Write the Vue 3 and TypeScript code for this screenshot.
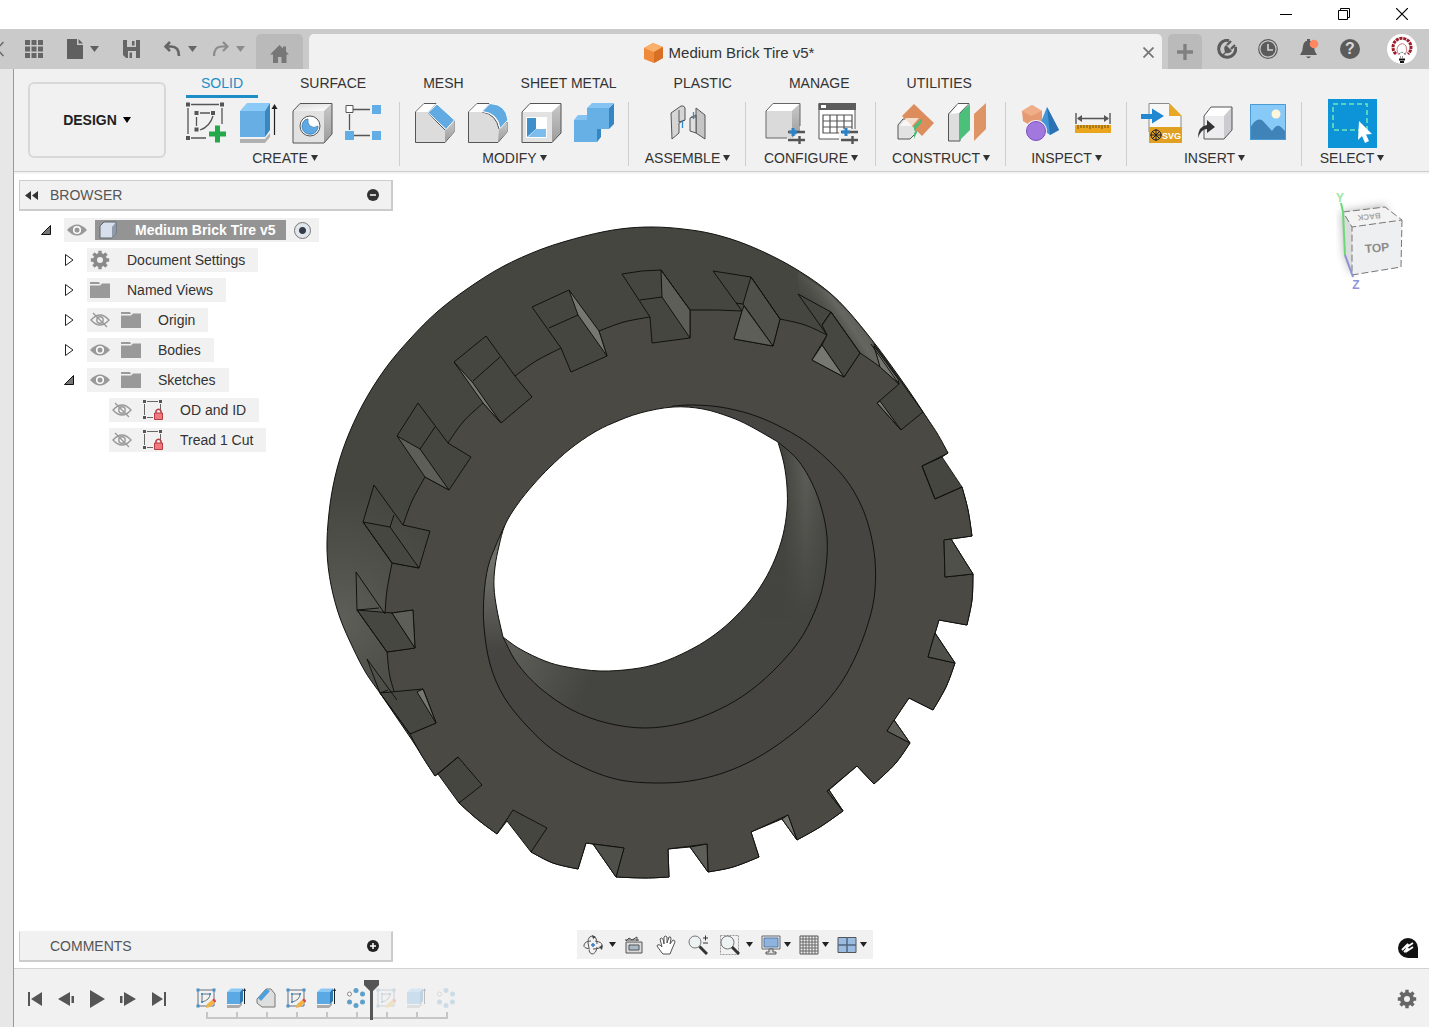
<script setup lang="ts">
import { ref } from 'vue'

type Point = [number, number]

interface RibbonGroup {
  label: string
  icons: string[]
  selected?: boolean
}

interface TreeRow {
  label: string
  level: number
  toggle: 'open' | 'closed' | 'none'
  eye: 'on' | 'off' | 'none'
  icon: string
}

const ribbonTabs = ['SOLID', 'SURFACE', 'MESH', 'SHEET METAL', 'PLASTIC', 'MANAGE', 'UTILITIES']
const activeTab = ref('SOLID')

const groups: RibbonGroup[] = [
  { label: 'CREATE', icons: ['sketch', 'extrude', 'hole', 'pattern'] },
  { label: 'MODIFY', icons: ['chamfer', 'fillet', 'shell', 'combine'] },
  { label: 'ASSEMBLE', icons: ['joint'] },
  { label: 'CONFIGURE', icons: ['configure', 'table'] },
  { label: 'CONSTRUCT', icons: ['plane', 'midplane'] },
  { label: 'INSPECT', icons: ['shapes', 'measure'] },
  { label: 'INSERT', icons: ['svgfile', 'derive', 'picture'] },
  { label: 'SELECT', icons: ['select'], selected: true },
]

const rows: TreeRow[] = [
  { label: 'Document Settings', level: 1, toggle: 'closed', eye: 'none', icon: 'gear' },
  { label: 'Named Views', level: 1, toggle: 'closed', eye: 'none', icon: 'folder' },
  { label: 'Origin', level: 1, toggle: 'closed', eye: 'off', icon: 'folder' },
  { label: 'Bodies', level: 1, toggle: 'closed', eye: 'on', icon: 'folder' },
  { label: 'Sketches', level: 1, toggle: 'open', eye: 'on', icon: 'folder' },
  { label: 'OD and ID', level: 2, toggle: 'none', eye: 'off', icon: 'locked' },
  { label: 'Tread 1 Cut', level: 2, toggle: 'none', eye: 'off', icon: 'locked' },
]

const navTools = [
  { icon: 'orbit', label: 'Orbit', menu: true, wide: true },
  { icon: 'lookat', label: 'Look At', menu: false, wide: false },
  { icon: 'hand', label: 'Pan', menu: false, wide: false },
  { icon: 'zoom', label: 'Zoom', menu: false, wide: false },
  { icon: 'zoomfit', label: 'Fit', menu: true, wide: true },
  { icon: 'monitor', label: 'Display Settings', menu: true, wide: false },
  { icon: 'gridlines', label: 'Grid and Snaps', menu: true, wide: false },
  { icon: 'viewports', label: 'Viewports', menu: true, wide: false },
]

const players = ['first', 'previous', 'play', 'next', 'last']

const features = [
  { icon: 't-sketch', dim: false },
  { icon: 't-extrude', dim: false },
  { icon: 't-chamfer', dim: false },
  { icon: 't-sketch', dim: false },
  { icon: 't-extrude', dim: false },
  { icon: 't-pattern', dim: false },
  { icon: 't-sketch', dim: true },
  { icon: 't-extrude', dim: true },
  { icon: 't-pattern', dim: true },
]

// Smooth curve through the points of one run, as cubic segments.
function curve(run: Point[]): string {
  let d = ''
  for (let i = 0; i < run.length - 1; i++) {
    const p0 = run[Math.max(i - 1, 0)]
    const p1 = run[i]
    const p2 = run[i + 1]
    const p3 = run[Math.min(i + 2, run.length - 1)]
    const c1 = [p1[0] + (p2[0] - p0[0]) / 6, p1[1] + (p2[1] - p0[1]) / 6]
    const c2 = [p2[0] - (p3[0] - p1[0]) / 6, p2[1] - (p3[1] - p1[1]) / 6]
    d += `C${c1[0].toFixed(1)},${c1[1].toFixed(1)} ${c2[0].toFixed(1)},${c2[1].toFixed(1)} ${p2[0]},${p2[1]}`
  }
  return d
}

// Runs are smooth inside and joined to each other by straight edges.
function outline(runs: Point[][]): string {
  return runs.map((run, i) => `${i === 0 ? 'M' : 'L'}${run[0][0]},${run[0][1]}${curve(run)}`).join('') + 'Z'
}

const body = outline([
  [[435, 776], [412, 740]],
  [[380, 693], [366, 673], [353, 648], [340, 618], [331, 585], [327, 550], [329, 513], [335, 477], [346, 441], [363, 404], [385, 369], [410, 339], [437, 312], [467, 289], [502, 267], [542, 249], [585, 236], [620, 229], [652, 227], [683, 229], [713, 234], [745, 244], [778, 259], [807, 276], [830, 293], [849, 312], [872, 340], [890, 364], [907, 388], [923, 412], [948, 453]],
  [[942, 457], [962, 487]],
  [[962, 487], [968, 510], [972, 536]],
  [[951, 539], [973, 574]],
  [[973, 574], [972, 600], [967, 625]],
  [[939, 620], [935, 633]],
  [[955, 663], [946, 687], [933, 710]],
  [[909, 698], [894, 720]],
  [[910, 743], [895, 764], [874, 784]],
  [[857, 766], [829, 790]],
  [[843, 811], [820, 827], [797, 840]],
  [[782, 819], [751, 832]],
  [[759, 857], [733, 867], [708, 872]],
  [[690, 847], [668, 849]],
  [[669, 877], [645, 878], [616, 877]],
  [[593, 844], [586, 843]],
  [[578, 869], [553, 863], [531, 852]],
  [[507, 821], [497, 834]],
  [[497, 834], [477, 819], [459, 803]],
  [[438, 774], [435, 776]],
])

const face = outline([
  [[650, 317], [652, 343]], [[690, 338], [690, 310]], [[716, 310], [742, 311]], [[734, 339], [773, 346]],
  [[780, 319], [805, 325], [827, 335]], [[812, 360], [844, 377]], [[860, 353], [880, 367], [899, 384]],
  [[877, 403], [901, 430]], [[923, 412], [937, 433], [948, 453]], [[922, 466], [935, 499]],
  [[962, 487], [968, 510], [972, 536]], [[944, 540], [945, 577]], [[973, 574], [972, 600], [967, 625]],
  [[939, 620], [928, 657]], [[955, 663], [946, 687], [933, 710]], [[909, 698], [887, 731]],
  [[910, 743], [895, 764], [874, 784]], [[857, 766], [827, 791]], [[843, 811], [820, 827], [797, 840]],
  [[788, 815], [751, 832]], [[759, 857], [733, 867], [708, 872]], [[707, 844], [668, 849]],
  [[669, 877], [645, 878], [616, 877]], [[624, 848], [586, 843]], [[578, 869], [553, 863], [531, 852]],
  [[547, 828], [513, 810]], [[497, 834], [477, 819], [459, 803]], [[482, 785], [458, 757]],
  [[435, 776], [422, 756], [410, 734]], [[436, 723], [423, 689]], [[397, 700], [390, 677], [387, 652]],
  [[415, 648], [413, 610]], [[385, 614], [387, 590], [392, 563]], [[419, 568], [430, 531]],
  [[403, 525], [412, 501], [425, 477]], [[449, 490], [471, 457]], [[448, 443], [463, 422], [483, 403]],
  [[501, 423], [532, 397]], [[515, 376], [536, 361], [561, 348]], [[571, 372], [607, 356]],
  [[599, 331], [624, 322], [650, 317]],
])

const rim = outline([[[673, 406], [693, 405], [720, 407], [750, 414], [777, 425], [805, 441], [828, 460], [847, 481], [861, 505], [870, 531], [875, 560], [875, 590], [870, 617], [858, 651], [841, 683], [817, 712], [787, 738], [755, 759], [723, 773], [690, 781], [655, 783], [620, 780], [587, 769], [553, 750], [527, 726], [504, 697], [490, 664], [484, 627], [484, 595], [488, 567], [496, 545], [505, 525]]])
const bore = outline([[[778, 442], [797, 459], [812, 483], [822, 510], [827, 537], [826, 567], [819, 600], [803, 635], [780, 664], [750, 691], [718, 710], [683, 723], [645, 728], [607, 723], [572, 710], [540, 688], [517, 663], [503, 637]]])
const hole = outline([
  [[778, 442], [750, 426], [730, 417], [703, 409], [673, 407], [640, 413], [613, 423], [593, 433], [570, 449], [550, 467], [533, 485], [517, 505], [505, 525], [499, 546], [495, 567], [494, 587], [497, 610], [503, 637]],
  [[503, 637], [520, 649], [545, 661], [567, 667], [600, 671], [633, 669], [660, 663], [688, 651], [710, 638], [730, 622], [750, 601], [764, 581], [775, 559], [783, 535], [787, 510], [787, 487], [784, 464], [778, 442]],
])

const facets = [
  { tone: 'light', points: '661,270 690,310 690,338 662,297' },
  { tone: 'soft', points: '751,277 780,319 773,346 743,304' },
  { tone: 'light', points: '742,311 744,306 773,346 734,339' },
  { tone: 'dark', points: '831,312 860,353 844,377 822,345 827,335 822,325' },
  { tone: 'bright', points: '822,345 844,377 812,360' },
  { tone: 'bright', points: '874,346 898,379 899,384 880,367' },
  { tone: 'bright', points: '877,403 880,401 901,430' },
  { tone: 'soft', points: '951,539 973,574 945,577 944,540' },
  { tone: 'soft', points: '935,633 955,663 928,657' },
  { tone: 'light', points: '894,720 910,743 887,731' },
  { tone: 'light', points: '829,790 843,811 827,791' },
  { tone: 'bright', points: '782,819 788,815 797,840' },
  { tone: 'light', points: '690,847 707,844 708,872' },
  { tone: 'soft', points: '593,844 624,848 616,877' },
  { tone: 'dark', points: '380,693 423,689 436,723 410,734' },
  { tone: 'bright', points: '417,692 423,689 436,723' },
  { tone: 'dark', points: '357,610 392,613 415,648 387,652' },
  { tone: 'light', points: '392,613 413,610 415,648' },
  { tone: 'dark', points: '363,522 390,527 419,568 392,563' },
  { tone: 'light', points: '397,436 420,449 449,490 425,477' },
  { tone: 'bright', points: '454,362 473,383 501,423 483,403' },
  { tone: 'bright', points: '569,290 578,315 607,356 599,331' },
]

const edges = [
  'M622,274Q642,270 661,270M640,300L662,297M622,274L650,317M661,270L690,310',
  'M713,271L751,277L780,319M713,271L742,311M736,303L743,304',
  'M798,294L831,312L860,353M798,294L827,335M831,312L822,325',
  'M871,344L899,384M874,344L923,412',
  'M942,457L922,466L935,499L962,487',
  'M458,757L438,774M380,693L410,734',
  'M367,659L397,700M367,659L380,693L388,690',
  'M356,572L385,614M356,572L357,610L387,652M357,610L379,608',
  'M374,485L403,525M374,485L363,522L392,563M390,527L394,515',
  'M418,403L448,443M418,403L397,436M420,449L435,427',
  'M486,336L515,376M486,336L454,362M473,381L500,357',
  'M532,307L569,290M532,307L561,348M549,328L578,315',
]
</script>

<template>
  <svg class="sprite" width="0" height="0" aria-hidden="true">
    <defs>
      <linearGradient id="g-top" x1="0" y1="0" x2="1" y2="1">
        <stop offset="0" stop-color="#d8d8d8" />
        <stop offset="1" stop-color="#ffffff" />
      </linearGradient>
      <linearGradient id="g-side" x1="0" y1="0" x2="0" y2="1">
        <stop offset="0" stop-color="#c9c9c9" />
        <stop offset="1" stop-color="#9c9c9c" />
      </linearGradient>
    </defs>
    <symbol id="sketch" viewBox="0 0 42 42">
      <path d="M6,2.5H34M3,6V32M6,36H21M37,6V22M15,11H25M11.5,15V24M28,14C26,21 21,26 15,28" fill="none" stroke="#555" stroke-width="1.3" />
      <path d="M1,.5h4v4h-4zM35,.5h4v4h-4zM1,34h4v4h-4zM9.5,9h4v4h-4zM26,9h4v4h-4zM9.5,25.5h4v4h-4z" fill="#555" />
      <path d="M30,23.5h5v6h6v5h-6v6h-5v-6h-6v-5h6z" fill="#25a84a" />
    </symbol>
    <symbol id="extrude" viewBox="0 0 42 42">
      <path d="M2,37H27L32,31V35L27,41H2Z" fill="#b0b0b0" />
      <path d="M2,9L9,1H32L27,9Z" fill="#8ccbf7" />
      <path d="M2,9H27V35H2Z" fill="#67aee5" />
      <path d="M27,9L32,1V28L27,35Z" fill="#3a87c0" />
      <path d="M36.5,33V5" stroke="#222" stroke-width="1.2" />
      <path d="M33.5,7L36.5,2L39.5,7Z" fill="#222" />
    </symbol>
    <symbol id="hole" viewBox="0 0 42 42">
      <path d="M2,9L9,1.5H41L33,9Z" fill="url(#g-top)" />
      <path d="M2,9H33V41H2Z" fill="#e2e2e2" />
      <path d="M33,9L41,1.5V32L33,41Z" fill="url(#g-side)" />
      <path d="M2,9L9,1.5H41V32L33,41H2Z" fill="none" stroke="#555" />
      <circle cx="19" cy="24" r="10" fill="#fff" stroke="#555" />
      <path d="M13,19A8,8 0 1 0 27,24Q23,27 19,24Q16,21 17,17Q14,17 13,19Z" fill="#5ea9e3" stroke="#276fa8" stroke-width=".7" />
    </symbol>
    <symbol id="pattern" viewBox="0 0 42 42">
      <path d="M12,8.5H29M8.5,13V29M13,34.5H29" stroke="#555" stroke-width="1.3" transform="translate(-3 -1)" />
      <path d="M2,3.5h7v7h-7z" fill="#fff" stroke="#555" />
      <path d="M28,3h9v9h-9zM1,29h9v9h-9zM28,29h9v9h-9z" fill="#63ade7" />
    </symbol>
    <symbol id="chamfer" viewBox="0 0 42 42">
      <path d="M1.5,10L10,1.5H22L14,11L31,28L40,18V30L31,40.5H1.5Z" fill="#dcdcdc" stroke="#555" />
      <path d="M2,10L10,2H22L14,10Z" fill="#fff" />
      <path d="M31,28L40,19V30L31,40Z" fill="url(#g-side)" />
      <path d="M23,2L40.5,18L32,27.5L14,10.5Z" fill="#62aae2" stroke="#fff" />
    </symbol>
    <symbol id="fillet" viewBox="0 0 42 42">
      <path d="M1.5,10L10,1.5H22L15,10Q29,12 32,27L40,20V30L31,40.5H1.5Z" fill="#dcdcdc" stroke="#555" />
      <path d="M2,10L10,2H22L15,10Z" fill="#fff" />
      <path d="M32,27L40,20V30L31,40Z" fill="url(#g-side)" />
      <path d="M23,1.5Q39,2 41,18L33,26.5Q31,11 15,9.5Z" fill="#62aae2" stroke="#fff" />
    </symbol>
    <symbol id="shell" viewBox="0 0 42 42">
      <path d="M2,10L10,1.5H41L32,10Z" fill="#fff" />
      <path d="M2,10H32V40.5H2Z" fill="#e2e2e2" />
      <path d="M32,10L41,1.5V31L32,40.5Z" fill="url(#g-side)" />
      <path d="M2,10L10,1.5H41V31L32,40.5H2Z" fill="none" stroke="#555" />
      <path d="M6,15H27V36H6Z" fill="#fff" />
      <path d="M7,16H16V27L7,35Z" fill="#3f8fca" />
      <path d="M16,27H26V35H8Z" fill="#7dbdee" />
    </symbol>
    <symbol id="combine" viewBox="0 0 42 42">
      <path d="M36,6L41,1V22L36,27ZM24,40L28,35V27H24Z" fill="#3686c4" />
      <path d="M14,6L19,1H41L36,6ZM1,18L5,13H14V18Z" fill="#85c3f2" />
      <path d="M1,18H14V6H36V27H24V40H1Z" fill="#67b0e6" />
    </symbol>
    <symbol id="joint" viewBox="0 0 42 42">
      <path d="M4,11L14,4Q17,3 18,6V18L12,21V31L5,37Z" fill="#d5d5d5" stroke="#555" />
      <path d="M29,6L38,13V37L29,31Z" fill="#c5c5c5" stroke="#555" />
      <path d="M23,16L29,13V31L23,29Z" fill="#dedede" stroke="#555" />
      <path d="M12,8V20L18,18M24,15H29" fill="none" stroke="#555" />
      <path d="M15.5,19V26M26.5,10V17" stroke="#308bd0" stroke-width="1.3" />
    </symbol>
    <symbol id="configure" viewBox="0 0 42 42">
      <path d="M2,9L9,1.5H36L28,9Z" fill="#fff" />
      <path d="M2,9H28V36H2Z" fill="#dadada" />
      <path d="M28,9L36,1.5V29L28,36Z" fill="url(#g-side)" />
      <path d="M2,36V9L9,1.5H36V24M2,36H23" fill="none" stroke="#666" />
      <path d="M24,30H41M24,38H41M35.5,34V42" stroke="#555" stroke-width="2.4" />
      <path d="M29,26V34M25,30H33" stroke="#2a83c8" stroke-width="3" />
    </symbol>
    <symbol id="table" viewBox="0 0 42 42">
      <path d="M2,2H38V37H2Z" fill="#fff" stroke="#555" />
      <path d="M1.5,1H39V8H1.5Z" fill="#5c5c5c" /><path d="M4,3H9V6H4Z" fill="#fff" />
      <path d="M6,13H35V31H6ZM6,19H35M6,25H35M13,13V31M20,13V31M27,13V31" fill="none" stroke="#555" stroke-width="1.2" />
      <path d="M22,27H42V42H22Z" fill="#f1f1f1" />
      <path d="M24,30H41M24,38H41M35.5,34V42" stroke="#555" stroke-width="2.4" />
      <path d="M29,26V34M25,30H33" stroke="#2a83c8" stroke-width="3" />
    </symbol>
    <symbol id="plane" viewBox="0 0 42 42">
      <path d="M4,37V23L9,17H22V31L16,37Z" fill="#e2e2e2" stroke="#555" />
      <path d="M20,2L40,21L28,34L8,14Z" fill="#dc8d5b" />
      <path d="M12,16H25L18,24H6Z" fill="#fff" opacity=".7" />
      <path d="M20,24L28,16V20L20,29ZM20,31L24,28L20,37Z" fill="#48bd77" />
    </symbol>
    <symbol id="midplane" viewBox="0 0 42 42">
      <path d="M1.5,12L11,1.5H22L13,11V39H1.5Z" fill="#dedede" stroke="#555" />
      <path d="M3,12L11,2H21L12,11Z" fill="#fff" />
      <path d="M12,12L23,2V28L12,39Z" fill="#4cbf7a" />
      <path d="M27,12L39,1V27L27,39Z" fill="#df9465" />
    </symbol>
    <symbol id="shapes" viewBox="0 0 42 42">
      <path d="M3,9L13,3L23,9V20L12,24L4,19Z" fill="#e59a72" /><path d="M3,9L13,3L23,9L12,14Z" fill="#f0ae88" />
      <path d="M28,5L40,28L31,33L20,25Z" fill="#4296d7" /><path d="M28,5L40,28L31,33Z" fill="#2b72b4" />
      <circle cx="17" cy="29" r="11" fill="#f1f1f1" /><circle cx="17" cy="29" r="9.5" fill="#a277de" stroke="#7b4dc0" />
    </symbol>
    <symbol id="measure" viewBox="0 0 42 42">
      <path d="M4,11V22M38,11V22M6,16.5H36" stroke="#555" stroke-width="1.4" />
      <path d="M5,16.5L10,13V20ZM37,16.5L32,13V20Z" fill="#555" />
      <path d="M3,23H39V31H3Z" fill="#eba51c" />
      <path d="M6,23V27M9,23V26M12,23V26M15,23V26M18,23V27M21,23V26M24,23V26M27,23V26M30,23V27M33,23V26M36,23V26" stroke="#6b5118" />
    </symbol>
    <symbol id="svgfile" viewBox="0 0 42 42">
      <path d="M8,1.5H28L40,14V30H8Z" fill="#f7f7f7" stroke="#8a8a8a" />
      <path d="M28,1L41,14H28Z" fill="#e8a824" /><path d="M8,25H41V41H8Z" fill="#e2a022" />
      <path d="M0,12H11V6.5L23,14L11,21.5V17H0Z" fill="#2288cf" />
      <g stroke="#222" fill="none"><circle cx="15" cy="33" r="5" /><path d="M15,27V39M9,33H21M11,29L19,37M19,29L11,37" /></g>
    </symbol>
    <symbol id="derive" viewBox="0 0 42 42">
      <path d="M10,14L17,5H38L30,14Z" fill="#fff" /><path d="M10,14H30V37H10Z" fill="#ededf0" /><path d="M30,14L38,5V28L30,37Z" fill="#cbcbd0" />
      <path d="M10,37V14L17,5H38V28L30,37Z" fill="none" stroke="#555" />
      <path d="M4,36Q4,24 13,23V18L21,25L13,31V27Q7,27 4,36Z" fill="#333" />
    </symbol>
    <symbol id="picture" viewBox="0 0 42 42">
      <path d="M3,2H39V38H3Z" fill="#88caf7" /><path d="M3,26Q10,14 16,19L25,29Q30,21 34,25L39,30V38H3Z" fill="#3f83b9" />
      <circle cx="29" cy="12" r="4.5" fill="#fff6dc" /><path d="M3.5,2.5H38.5V37.5H3.5Z" fill="none" stroke="#4b9bd4" />
    </symbol>
    <symbol id="select" viewBox="0 0 49 49">
      <path d="M0,0H49V49H0Z" fill="#0c93d8" />
      <path d="M5,5H39V31H5Z" fill="none" stroke="#75e8b6" stroke-width="1.5" stroke-dasharray="5 3" />
      <path d="M31,22L44,35L38,35.5L41,42L37,44L34,37L30,41Z" fill="#fff" />
    </symbol>

    <symbol id="gear" viewBox="0 0 20 20">
      <g fill="none" stroke="currentColor"><circle cx="10" cy="10" r="5" stroke-width="4" /><path d="M10,.8V4M10,16V19.2M.8,10H4M16,10H19.2M3.5,3.5L5.7,5.7M14.3,14.3L16.5,16.5M3.5,16.5L5.7,14.3M14.3,5.7L16.5,3.5" stroke-width="3.4" /></g>
    </symbol>
    <symbol id="folder" viewBox="0 0 20 20">
      <path d="M0,2H9L10,4H0ZM0,5.500H10L12,3.500H20V18H0Z" fill="#999" />
    </symbol>
    <symbol id="locked" viewBox="0 0 20 20">
      <path d="M4,1.5H15M1.5,4V15M4,17.5H10M17.5,4V10" stroke="#666" />
      <path d="M0,0h3v3h-3zM16,0h3v3h-3zM0,16h3v3h-3z" fill="#555" />
      <path d="M13,13V11Q15.5,7.5 18,11V13" fill="none" stroke="#b53d42" stroke-width="1.5" /><path d="M11.5,13H19.5V19.5H11.5Z" fill="#ef7b80" stroke="#b53d42" />
    </symbol>
    <symbol id="eye-on" viewBox="0 0 20 20">
      <path d="M0,10Q10,-1 20,10Q10,21 0,10Z" fill="#999" /><circle cx="10" cy="10" r="3.3" fill="none" stroke="#fff" stroke-width="1.5" />
    </symbol>
    <symbol id="eye-off" viewBox="0 0 20 20">
      <path d="M1,10Q10,0 19,10Q10,20 1,10ZM3,3L17,17" fill="none" stroke="#999" stroke-width="1.4" /><circle cx="10" cy="10" r="3.2" fill="none" stroke="#999" stroke-width="1.4" />
    </symbol>

    <symbol id="orbit" viewBox="0 0 20 20">
      <g fill="none" stroke="#555"><path d="M6,13Q3,2 9,1Q14,1 14,9M14,12Q13,19 9,19Q6,18 6,15M12,6Q19,7 19,10Q18,14 10,14M7,14Q0,13 1,10Q2,6 8,6" /></g>
      <path d="M10,8V12M8,10H12" stroke="#3b79c4" stroke-width="1.5" /><path d="M9,0L13,2L10,4ZM16,12L20,10L19,15Z" fill="#444" />
    </symbol>
    <symbol id="lookat" viewBox="0 0 20 20">
      <path d="M2,7H18V18H2Z" fill="#d9d9d9" stroke="#555" /><path d="M5,10H15V15H5Z" fill="#a9bac8" stroke="#555" /><path d="M2,6L5,3L8,5L13,2V6M1,5H15" fill="none" stroke="#444" />
    </symbol>
    <symbol id="hand" viewBox="0 0 20 20">
      <path d="M6,18L1,11Q1,9 4,10L6,12L4,4Q5,2 7,4L8,9L8,2Q9,0 11,2V8L13,2Q15,1 15,4L14,9L17,5Q19,5 19,7L16,14L14,19H7Z" fill="#fff" stroke="#555" />
    </symbol>
    <symbol id="zoom" viewBox="0 0 20 20">
      <circle cx="7" cy="7" r="6" fill="#edf3f2" stroke="#777" /><path d="M11.5,11.5L19,19" stroke="#333" stroke-width="3" /><path d="M15,3H20M17.5,.5V5.5M15,8H20" stroke="#333" />
    </symbol>
    <symbol id="zoomfit" viewBox="0 0 20 20">
      <path d="M.5,.5H18.5V19.5H.5Z" fill="none" stroke="#999" stroke-dasharray="2 1" /><circle cx="7.5" cy="7.5" r="6.5" fill="#edf3f2" stroke="#777" /><path d="M12,12L19,19" stroke="#333" stroke-width="3" />
    </symbol>
    <symbol id="monitor" viewBox="0 0 20 20">
      <path d="M1,1H19V14H1Z" fill="#eee" stroke="#666" /><path d="M3,3H17V12H3Z" fill="#8fb3dc" stroke="#5279a8" /><path d="M8,14H12V17H15V19H5V17H8Z" fill="#ddd" stroke="#555" />
    </symbol>
    <symbol id="gridlines" viewBox="0 0 20 20">
      <path d="M1,1H19V19H1Z" fill="#eee" stroke="#555" /><path d="M4,1V19M7,1V19M10,1V19M13,1V19M16,1V19M1,4H19M1,7H19M1,10H19M1,13H19M1,16H19" stroke="#666" />
    </symbol>
    <symbol id="viewports" viewBox="0 0 20 20">
      <path d="M1,2.5H19V17.5H1Z" fill="#9bbbe0" stroke="#555" /><path d="M10,2V18M1,10H19" stroke="#536780" stroke-width="1.5" />
    </symbol>

    <symbol id="first" viewBox="0 0 16 16"><path d="M1,1H3V15H1ZM15,1V15L4,8Z" fill="#555" /></symbol>
    <symbol id="previous" viewBox="0 0 16 16"><path d="M0,8L12,1V15ZM13.5,5H16V12H13.5Z" fill="#555" /></symbol>
    <symbol id="play" viewBox="0 0 16 18"><path d="M1,0L16,9L1,18Z" fill="#555" /></symbol>
    <symbol id="next" viewBox="0 0 16 16"><path d="M16,8L4,1V15ZM0,5H2.5V12H0Z" fill="#555" /></symbol>
    <symbol id="last" viewBox="0 0 16 16"><path d="M13,1H15V15H13ZM1,1V15L12,8Z" fill="#555" /></symbol>

    <symbol id="t-sketch" viewBox="0 0 20 20">
      <path d="M2,2H18V18H2ZM6,6H14Q14,12 6,14Z" fill="none" stroke="#66717d" /><path d="M.5,.5h3v3h-3zM16.5,.5h3v3h-3zM.5,16.5h3v3h-3zM5,5h2v2h-2zM13,5h2v2h-2zM5,13h2v2h-2z" fill="#4890c8" />
      <path d="M10,20L11,16L16,12L19,14.5L14,19Z" fill="#f0b344" /><path d="M16,12L18,10.5L20.5,13L19,14.5Z" fill="#dc4343" />
    </symbol>
    <symbol id="t-extrude" viewBox="0 0 20 20">
      <path d="M1,17H13L16,14V17L13,20H1Z" fill="#aaa" /><path d="M1,4L5,.5H17L14,4Z" fill="#8bc8f4" /><path d="M1,4H14V16H1Z" fill="#5aa9e4" /><path d="M14,4L17,.5V13L14,16Z" fill="#2c78b5" /><path d="M18.5,2V16" stroke="#222" /><path d="M17,3L18.5,0L20,3Z" fill="#222" />
    </symbol>
    <symbol id="t-chamfer" viewBox="0 0 20 20">
      <path d="M1,11L10,1H15L19,6V19H6L1,15Z" fill="#dedede" stroke="#777" /><path d="M2,10L10,1L14,3L5,13Z" fill="#4b9fdd" />
    </symbol>
    <symbol id="t-pattern" viewBox="0 0 20 20">
      <g fill="#5da0ca"><circle cx="10" cy="2.5" r="2.5" /><circle cx="16.5" cy="6" r="2.5" /><circle cx="16.5" cy="14" r="2.5" /><circle cx="10" cy="17.5" r="2.5" /><circle cx="3.5" cy="14" r="2.5" /></g><circle cx="3.5" cy="6" r="2" fill="#fff" stroke="#888" />
    </symbol>
  </svg>

  <div class="app">
    <header class="window-bar">
      <button type="button" aria-label="Minimize"><svg width="12" height="12"><path d="M0,6.5H12" stroke="#000" /></svg></button>
      <button type="button" aria-label="Restore"><svg width="12" height="12"><path d="M.5,2.5H9.5V11.5H.5ZM2.5,2.5V.5H11.5V9.5H9.5" fill="none" stroke="#000" /></svg></button>
      <button type="button" aria-label="Close"><svg width="12" height="12"><path d="M0,0L12,12M12,0L0,12" stroke="#000" stroke-width="1.2" /></svg></button>
    </header>

    <div class="tab-bar">
      <div class="quick">
        <button type="button" class="edge" aria-label="Back"><svg width="4" height="16"><path d="M3.5,1L-3,8L3.5,15" fill="none" stroke="#666" stroke-width="1.5" /></svg></button>
        <button type="button" aria-label="Data panel">
          <svg width="18" height="18" fill="#666"><path d="M0,0h5v5H0zM6.5,0h5v5h-5zM13,0h5v5h-5zM0,6.5h5v5H0zM6.5,6.5h5v5h-5zM13,6.5h5v5h-5zM0,13h5v5H0zM6.5,13h5v5h-5zM13,13h5v5h-5z" /></svg>
        </button>
        <button type="button" aria-label="File">
          <svg width="16" height="20" fill="#606060"><path d="M0,0H10V6H16V20H0ZM11.5,0L16,4.5H11.5Z" /></svg>
          <svg class="gap" width="9" height="6" fill="#606060"><path d="M0,0H9L4.5,6Z" /></svg>
        </button>
        <button type="button" aria-label="Save">
          <svg width="17" height="18"><path d="M0,0H17V18H3L0,15Z" fill="#666" /><path d="M4,0H13V7H4ZM5,11H13V18H5Z" fill="#ccc" /><path d="M9,1H11.5V5.5H9ZM6.5,12.5H9V18H6.5Z" fill="#666" /></svg>
        </button>
        <div class="history">
          <button type="button" aria-label="Undo">
            <svg width="17" height="16"><path d="M6,1L1.5,5.5L6,10M2,5.5H7Q15,5.5 15,15" fill="none" stroke="#666" stroke-width="2.6" /></svg>
            <svg class="gap" width="9" height="6" fill="#666"><path d="M0,0H9L4.5,6Z" /></svg>
          </button>
          <button type="button" aria-label="Redo">
            <svg width="17" height="16"><path d="M11,1L15.5,5.5L11,10M15,5.5H10Q2,5.5 2,15" fill="none" stroke="#8c8c8c" stroke-width="2.2" /></svg>
            <svg class="gap" width="9" height="6" fill="#8c8c8c"><path d="M0,0H9L4.5,6Z" /></svg>
          </button>
        </div>
      </div>
      <button type="button" class="home" aria-label="Home">
        <svg width="19" height="18" fill="#777"><path d="M9.5,0L13,3.5V1.5H16V6.5L19,9.5H16.5V18H11.5V12H8V18H3V9.5H0Z" /></svg>
      </button>
      <div class="doc-tab">
        <span class="doc-title">
          <svg width="19" height="20"><path d="M0,5L9,0L19,4V15L10,20L0,16Z" fill="#ef8a3c" /><path d="M0,5L9,0L19,4L10,9Z" fill="#f9b06b" /><path d="M10,9L19,4V15L10,20Z" fill="#d76f24" /></svg>
          Medium Brick Tire v5*
        </span>
        <button type="button" aria-label="Close document"><svg width="11" height="11"><path d="M.5,.5L10.5,10.5M10.5,.5L.5,10.5" stroke="#777" stroke-width="1.8" /></svg></button>
      </div>
      <button type="button" class="new-tab" aria-label="New design"><svg width="16" height="16"><path d="M8,0V16M0,8H16" stroke="#808080" stroke-width="3.4" /></svg></button>
      <div class="status">
        <button type="button" aria-label="Extensions"><svg width="20" height="20"><path d="M12,1.5A8.500,8.500 0 1 0 18.500,8" fill="none" stroke="#5b5b5b" stroke-width="3" /><path d="M4,17L8,13Q6,8 9,6L15,12Q12,15 9,14L5,18Z" fill="#5b5b5b" /><path d="M10,6L14,2M14,10L18,6" stroke="#5b5b5b" stroke-width="2.4" /></svg></button>
        <button type="button" aria-label="Job status"><svg width="20" height="20"><circle cx="10" cy="10" r="9.3" fill="none" stroke="#5b5b5b" stroke-width="1.2" /><circle cx="10" cy="10" r="7.5" fill="#5b5b5b" /><path d="M10,5V11H15" fill="none" stroke="#d4d4d4" stroke-width="1.6" /></svg></button>
        <button type="button" aria-label="Notifications"><svg width="20" height="20"><path d="M1,16Q4,12 4,7Q5,2 8,2V0H11V2Q14,2 15,7Q15,12 18,16ZM7,17.5H12Q9.5,21 7,17.5Z" fill="#5b5b5b" /><circle cx="15" cy="5" r="4.3" fill="#ff8761" /></svg></button>
        <button type="button" class="help" aria-label="Help">?</button>
        <button type="button" class="avatar" aria-label="Profile"><svg width="30" height="30"><circle cx="15" cy="15" r="15" fill="#fff" /><path d="M9,20A9,9 0 1 1 21,20" fill="none" stroke="#9d1b28" stroke-width="3" stroke-dasharray="3 .8" /><path d="M12,21Q8,15 12,11Q16,8 19,12Q21,16 18,21" fill="none" stroke="#c87a81" stroke-width="1" /><path d="M12,20L15,18L18,20M13,23H17" fill="none" stroke="#333" stroke-dasharray="1 1" /><path d="M12,25.5H18M13,28H17" stroke="#111" stroke-width="1.8" /></svg></button>
      </div>
    </div>

    <div class="workspace">
      <aside class="strip"></aside>
      <div class="stage">
        <div class="ribbon">
          <button type="button" class="design">DESIGN <svg width="8" height="6"><path d="M0,0H8L4,6Z" /></svg></button>
          <div class="tools">
            <nav class="ribbon-tabs">
              <button v-for="tab in ribbonTabs" :key="tab" type="button" :class="{ active: tab === activeTab }" @click="activeTab = tab">{{ tab }}</button>
            </nav>
            <div class="groups">
              <section v-for="group in groups" :key="group.label" class="group">
                <div class="group-icons">
                  <button v-for="icon in group.icons" :key="icon" type="button" :aria-label="icon">
                    <svg :class="{ selected: group.selected }">
                      <use :href="'#' + icon" />
                      <text v-if="icon === 'svgfile'" x="21" y="37" class="badge">SVG</text>
                    </svg>
                  </button>
                </div>
                <button type="button" class="group-label">{{ group.label }}<svg width="7" height="6"><path d="M0,0H7L3.5,6Z" fill="#333" /></svg></button>
              </section>
            </div>
          </div>
        </div>

        <main class="canvas">
          <svg class="model" viewBox="14 174 1415 794" role="img" aria-label="Tire model">
            <defs>
              <radialGradient id="tread" gradientUnits="userSpaceOnUse" cx="338" cy="620" r="130">
                <stop offset="0" stop-color="#5f5f5a" /><stop offset=".4" stop-color="#53534e" /><stop offset="1" stop-color="#464641" />
              </radialGradient>
              <linearGradient id="shine" gradientUnits="userSpaceOnUse" x1="818" y1="330" x2="862" y2="300">
                <stop offset="0" stop-color="#464641" stop-opacity="0" /><stop offset=".55" stop-color="#666661" /><stop offset="1" stop-color="#565651" />
              </linearGradient>
              <linearGradient id="wall" gradientUnits="userSpaceOnUse" x1="784" y1="0" x2="827" y2="0">
                <stop offset="0" stop-color="#454540" /><stop offset=".5" stop-color="#62625d" /><stop offset="1" stop-color="#4b4b46" />
              </linearGradient>
              <linearGradient id="fade" gradientUnits="userSpaceOnUse" x1="0" y1="440" x2="0" y2="620">
                <stop offset="0" stop-color="#fff" /><stop offset="1" stop-color="#000" />
              </linearGradient>
              <mask id="wall-mask"><rect x="760" y="430" width="90" height="200" fill="url(#fade)" /></mask>
              <linearGradient id="foot" gradientUnits="userSpaceOnUse" x1="500" y1="640" x2="590" y2="680">
                <stop offset="0" stop-color="#62625d" /><stop offset="1" stop-color="#444440" />
              </linearGradient>
              <radialGradient id="lip" gradientUnits="userSpaceOnUse" cx="490" cy="560" r="90">
                <stop offset="0" stop-color="#74746f" /><stop offset="1" stop-color="#464541" />
              </radialGradient>
            </defs>
            <path :d="body" fill="url(#tread)" class="line" />
            <path d="M798,272L830,294L849,313L872,341L880,367L860,353L831,312L798,294Z" fill="url(#shine)" />
            <path :d="face" fill="#4a4943" class="line" />
            <polygon v-for="f in facets" :key="f.points" :points="f.points" :class="['line', f.tone]" />
            <path v-for="e in edges" :key="e" :d="e" fill="none" class="line" />
            <path :d="rim" fill="url(#lip)" class="line" />
            <path :d="bore" fill="url(#foot)" />
            <path :d="bore" fill="url(#wall)" mask="url(#wall-mask)" />
            <path :d="bore" fill="none" class="line" />
            <path :d="hole" fill="#fff" class="line" />
          </svg>

          <section class="browser">
            <header class="panel">
              <svg width="13" height="9"><path d="M6,0V9L0,4.5ZM13,0V9L7,4.5Z" fill="#333" /></svg>
              <span>BROWSER</span>
              <button type="button" aria-label="Collapse"><svg width="12" height="12"><circle cx="6" cy="6" r="6" fill="#333" /><path d="M3,6H9" stroke="#fff" stroke-width="1.5" /></svg></button>
            </header>
            <ul class="tree">
              <li class="row level-0">
                <span class="toggle"><svg width="10" height="10"><path d="M9.5,.5V9.5H.5Z" fill="#777" stroke="#111" /></svg></span>
                <label class="chip root">
                  <svg class="ico"><use href="#eye-on" /></svg>
                  <span class="root-name">
                    <svg width="18" height="18"><path d="M1,5L5,1H17V13L13,17H1Z" fill="#d7dfec" stroke="#5f6670" /><path d="M13,6L17,1V13L13,17Z" fill="#8e99aa" /></svg>
                    <b>Medium Brick Tire v5</b>
                  </span>
                  <input type="radio" name="active-component" checked />
                </label>
              </li>
              <li v-for="row in rows" :key="row.label" :class="['row', 'level-' + row.level]">
                <span class="toggle">
                  <svg v-if="row.toggle === 'closed'" width="10" height="12"><path d="M1.5,.5L9,6L1.5,11.5Z" fill="#fff" stroke="#222" /></svg>
                  <svg v-else-if="row.toggle === 'open'" width="10" height="10"><path d="M9.5,.5V9.5H.5Z" fill="#777" stroke="#111" /></svg>
                </span>
                <span class="chip">
                  <svg v-if="row.eye !== 'none'" class="ico"><use :href="'#eye-' + row.eye" /></svg>
                  <svg class="ico"><use :href="'#' + row.icon" /></svg>
                  <span class="name">{{ row.label }}</span>
                </span>
              </li>
            </ul>
          </section>

          <svg class="cube" viewBox="1326 186 84 110" width="84" height="110">
            <defs><filter id="soft"><feGaussianBlur stdDeviation="4" /></filter></defs>
            <path d="M1341,212L1385,205L1390,225L1352,275L1344,255Z" fill="#8b8b8b" opacity=".6" filter="url(#soft)" />
            <path d="M1343,212L1385,207L1402,220L1352,227Z" fill="#f3f3f3" />
            <path d="M1352,227L1402,220L1401,267L1352,275Z" fill="#eeeff1" />
            <path d="M1343,212L1352,227V275L1345,255Z" fill="#dcdcdc" />
            <path d="M1343,212L1385,207L1402,220L1352,227ZM1402,220L1401,267L1352,275V227" fill="none" stroke="#777" stroke-dasharray="7 3" />
            <path d="M1341,203L1343,212L1345,255" fill="none" stroke="#69d977" stroke-width="2" />
            <path d="M1345,255L1353,277" stroke="#8b8fd6" stroke-width="2" />
            <text x="1340" y="202" class="axis y">Y</text>
            <text x="1356" y="289" class="axis z">Z</text>
            <text x="1377" y="252" class="side" transform="rotate(-5 1377 248)">TOP</text>
            <text x="1369" y="220" class="rear" transform="rotate(174 1369 217)">BACK</text>
          </svg>

          <section class="panel comments">
            <span>COMMENTS</span>
            <button type="button" aria-label="Expand"><svg width="12" height="12"><circle cx="6" cy="6" r="6" fill="#222" /><path d="M3,6H9M6,3V9" stroke="#fff" stroke-width="1.5" /></svg></button>
          </section>

          <div class="nav-holder">
            <div class="nav-bar">
              <button v-for="tool in navTools" :key="tool.icon" type="button" :aria-label="tool.label" :class="{ menu: tool.menu, wide: tool.wide }">
                <svg class="ico"><use :href="'#' + tool.icon" /></svg>
                <svg v-if="tool.menu" class="caret" width="7" height="5"><path d="M0,0H7L3.5,5Z" fill="#222" /></svg>
              </button>
            </div>
          </div>

          <button type="button" class="assistant" aria-label="Assistant"><svg width="20" height="20"><path d="M10,0A10,10 0 0 1 20,10V20H10A10,10 0 0 1 10,0Z" fill="#111" /><path d="M4,12L10,6L9,9L15,5M6,14L10,10L9,13L15,9" fill="none" stroke="#fff" stroke-width="1.8" /></svg></button>
        </main>

        <footer class="timeline">
          <div class="players">
            <button v-for="p in players" :key="p" type="button" :aria-label="p"><svg :class="{ big: p === 'play' }"><use :href="'#' + p" /></svg></button>
          </div>
          <div class="history-track">
            <ol>
              <li v-for="(f, i) in features" :key="i" :class="{ dim: f.dim }"><svg class="ico"><use :href="'#' + f.icon" /></svg></li>
            </ol>
            <div class="track"><i v-for="(f, i) in features" :key="i"></i></div>
            <svg class="marker" width="15" height="40"><path d="M0,0H15V5L9,11V40H6V11L0,5Z" fill="#555" /></svg>
          </div>
          <button type="button" class="settings" aria-label="Timeline settings"><svg class="ico"><use href="#gear" /></svg></button>
        </footer>
      </div>
    </div>
  </div>
</template>

<style>
body {
  background: #fff;
}
</style>

<style scoped>
.sprite {
  position: absolute;
}

.app {
  display: flex;
  flex-direction: column;
  min-height: 100vh;
  font: 14px/20px "Liberation Sans", Arial, sans-serif;
  color: #333;
}

button {
  display: flex;
  align-items: center;
  justify-content: center;
  padding: 0;
  border: 0;
  background: none;
  color: inherit;
  font: inherit;
}

svg {
  flex: none;
  display: block;
}

.ico {
  width: 20px;
  height: 20px;
}

.window-bar {
  display: flex;
  justify-content: flex-end;
  gap: 4px;
  height: 29px;
}

.window-bar button {
  width: 54px;
  height: 28px;
}

.tab-bar {
  display: flex;
  align-items: flex-end;
  height: 40px;
  background: #cacaca;
}

.quick {
  display: flex;
  align-items: center;
  gap: 24px;
  height: 40px;
  margin-right: 11px;
}

.edge {
  margin-right: -3px;
}

.gap {
  margin-left: 7px;
}

.history {
  display: flex;
  gap: 15px;
}

.home {
  width: 47px;
  height: 35px;
  margin-right: 6px;
  padding-top: 4px;
  border-radius: 5px 5px 0 0;
  background: #bababa;
}

.doc-tab {
  display: flex;
  flex: 1;
  align-items: center;
  height: 35px;
  padding: 2px 8px 0 6px;
  box-sizing: border-box;
  border-radius: 5px 5px 0 0;
  background: #f1f1f1;
}

.doc-title {
  display: flex;
  flex: 1;
  align-items: center;
  justify-content: center;
  gap: 6px;
  font-size: 15px;
}

.new-tab {
  width: 34px;
  height: 35px;
  margin-left: 6px;
  border-radius: 5px 5px 0 0;
  background: #bababa;
}

.status {
  display: flex;
  align-items: center;
  gap: 21px;
  height: 40px;
  padding: 0 12px 0 15px;
}

.help {
  width: 20px;
  height: 20px;
  border-radius: 50%;
  background: #5b5b5b;
  color: #d8d8d8;
  font-size: 16px;
  font-weight: 700;
}

.avatar {
  margin-left: 6px;
}

.workspace {
  display: flex;
  flex: 1;
}

.strip {
  flex: none;
  width: 13px;
  border-right: 1px solid #999;
  background: #e7e7e7;
}

.stage {
  display: flex;
  flex: 1;
  flex-direction: column;
  min-width: 0;
}

.ribbon {
  display: flex;
  align-items: flex-start;
  height: 102px;
  border-bottom: 1px solid #ccc;
  background: #f1f1f1;
  box-shadow: 0 2px 0 #f4f4f4;
}

.design {
  flex: none;
  gap: 6px;
  width: 138px;
  height: 76px;
  margin: 13px 4px 0 14px;
  border: 2px solid #d8d8d8;
  border-radius: 6px;
  color: #222;
  font-weight: 700;
}

.ribbon-tabs {
  display: flex;
  gap: 27px;
  padding-left: 16px;
}

.ribbon-tabs button {
  height: 29px;
  padding: 2px 15px 0;
  border-bottom: 3px solid transparent;
}

.ribbon-tabs .active {
  border-color: #1d8ec5;
  color: #1d8ec5;
}

.groups {
  display: grid;
  grid-template-columns: 230px 229px 117px 130px 130px 121px 175px 100px;
}

.group {
  position: relative;
  display: flex;
  flex-direction: column;
  align-items: center;
}

.group:not(:last-child)::after {
  content: "";
  position: absolute;
  top: 4px;
  right: 0;
  bottom: 2px;
  width: 1px;
  background: #cfcfcf;
}

.group-icons {
  display: flex;
  height: 50px;
}

.group-icons button {
  width: 53px;
}

.group-icons svg {
  width: 42px;
  height: 42px;
}

.group-icons .selected {
  width: 49px;
  height: 49px;
}

.badge {
  fill: #fff;
  font-size: 9px;
  font-weight: 700;
}

.group-label {
  gap: 3px;
}

.canvas {
  position: relative;
  flex: 1;
  min-height: 600px;
  margin-top: 2px;
  background: #fff;
}

.model {
  position: absolute;
  width: 100%;
  height: 100%;
}

.line {
  stroke: #11110f;
  stroke-width: 1;
  stroke-linejoin: round;
}

.dark {
  fill: #474742;
}

.soft {
  fill: #50504b;
}

.light {
  fill: #5e5e59;
}

.bright {
  fill: #777772;
}

.browser {
  position: absolute;
  top: 6px;
  left: 5px;
  width: 374px;
}

.panel {
  display: flex;
  align-items: center;
  box-sizing: border-box;
  height: 31px;
  padding: 0 12px 0 5px;
  border: 1px solid #ccc;
  border-width: 1px 2px 2px 1px;
  background: #f1f1f1;
  color: #555;
}

.panel span {
  flex: 1;
  margin-left: 12px;
}

.comments {
  position: absolute;
  bottom: 6px;
  left: 5px;
  width: 374px;
  border-top-color: #f1f1f1;
}

.comments span {
  margin-left: 25px;
}

.tree {
  margin: 4px 0 0;
  padding: 0;
  list-style: none;
}

.row {
  display: flex;
  align-items: center;
  height: 30px;
  margin-left: 22px;
}

.level-1 {
  margin-left: 45px;
}

.level-2 {
  margin-left: 67px;
}

.toggle {
  flex: none;
  width: 23px;
}

.chip {
  display: flex;
  align-items: center;
  gap: 11px;
  height: 24px;
  padding: 0 13px 0 3px;
  background: #f1f1f1;
}

.chip .ico {
  color: #8a8a8a;
}

.name {
  margin-left: 6px;
}

.root {
  gap: 8px;
  padding-right: 8px;
}

.root-name {
  display: flex;
  align-items: center;
  gap: 18px;
  height: 20px;
  padding: 0 10px 0 4px;
  background: #949494;
  color: #fff;
}

.root input {
  width: 17px;
  height: 17px;
  margin: 0;
  border: 1px solid #777;
  border-radius: 50%;
  appearance: none;
  background: radial-gradient(circle, #333b48 3px, #e1e5ec 4px);
}

.cube {
  position: absolute;
  top: 12px;
  right: 19px;
}

.axis,
.side,
.rear {
  font-size: 12px;
  font-weight: 700;
  text-anchor: middle;
}

.y {
  fill: #9be8a3;
}

.z {
  fill: #8f94da;
}

.side {
  fill: #8c8c8c;
}

.rear {
  fill: #a8a8a8;
  font-size: 8px;
}

.nav-holder {
  position: absolute;
  right: 0;
  bottom: 9px;
  left: 6px;
  display: flex;
  justify-content: center;
  pointer-events: none;
}

.nav-bar {
  display: flex;
  height: 29px;
  padding-right: 4px;
  background: #f1f1f1;
  pointer-events: auto;
}

.nav-bar button {
  padding: 0 6px;
}

.nav-bar .menu {
  gap: 3px;
  padding-right: 2px;
}

.nav-bar .wide {
  gap: 6px;
}

.assistant {
  position: absolute;
  right: 11px;
  bottom: 10px;
}

.timeline {
  display: flex;
  height: 58px;
  border-top: 1px solid #d2d2d2;
  background: #f1f1f1;
}

.players {
  display: flex;
  align-items: center;
  height: 60px;
  padding-left: 5px;
}

.players button {
  width: 31px;
}

.players svg {
  width: 16px;
  height: 16px;
}

.players .big {
  height: 18px;
}

.history-track {
  position: relative;
  margin-left: 17px;
}

.history-track ol {
  display: flex;
  margin: 19px 0 0;
  padding: 0;
  list-style: none;
}

.history-track li {
  width: 30px;
  padding-left: 5px;
  box-sizing: border-box;
}

.dim {
  opacity: 0.25;
}

.track {
  display: flex;
  justify-content: space-between;
  height: 5px;
  margin: 4px 13px 0 15px;
  border-bottom: 2px solid #c6c6c6;
}

.track i {
  width: 2px;
  background: #c6c6c6;
}

.marker {
  position: absolute;
  top: 11px;
  left: 173px;
}

.settings {
  height: 60px;
  margin: 0 12px 0 auto;
  color: #666;
}
</style>
